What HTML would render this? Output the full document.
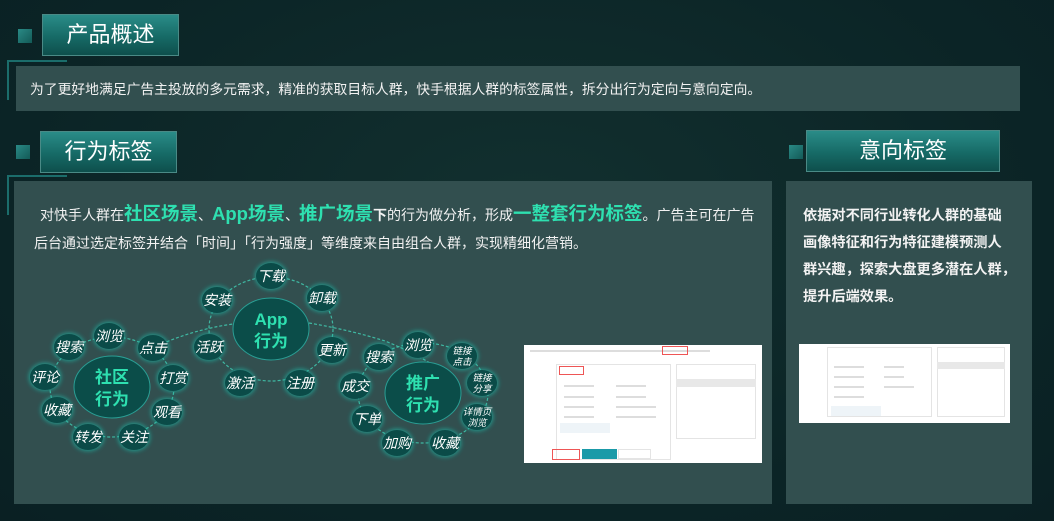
<!DOCTYPE html>
<html><head><meta charset="utf-8"><style>
*{margin:0;padding:0;box-sizing:border-box}
body{width:1054px;height:521px;overflow:hidden;background:radial-gradient(ellipse at 50% 40%,#12302f 0%,#0b2426 70%,#0a2023 100%);font-family:"Liberation Sans","Noto Sans CJK SC",sans-serif;color:#fff;position:relative}
.a{position:absolute}
.mk{position:absolute;width:14px;height:14px;background:linear-gradient(135deg,#2a8a86,#135a57)}
.tb{position:absolute;background:linear-gradient(180deg,#2a8c88 0%,#166a66 55%,#0e4f4c 100%);border:1px solid #4a8a86;color:#fff;font-size:22px;text-align:center}
.pn{position:absolute;background:#324f4f}
.lc{position:absolute;border-left:2px solid #1b6d6b;border-top:2px solid #1b6d6b;width:60px;height:40px}
.sh{position:absolute;background:#fff;overflow:hidden}
.g{position:absolute;background:#ccc;height:3px}
</style></head><body>
<div class="mk" style="left:18px;top:29px"></div>
<div class="tb" style="left:42px;top:14px;width:137px;height:42px;line-height:40px">产品概述</div>
<div class="lc" style="left:7px;top:60px"></div>
<div class="pn" style="left:16px;top:66px;width:1004px;height:45px"></div>
<div class="a" style="left:30px;top:80px;font-size:13.8px;line-height:20px;color:#f2f2f2">为了更好地满足广告主投放的多元需求，精准的获取目标人群，快手根据人群的标签属性，拆分出行为定向与意向定向。</div>

<div class="mk" style="left:16px;top:145px"></div>
<div class="tb" style="left:40px;top:131px;width:137px;height:42px;line-height:40px">行为标签</div>
<div class="lc" style="left:7px;top:175px"></div>
<div class="pn" style="left:14px;top:181px;width:758px;height:323px"></div>
<div class="a" style="left:40px;top:201px;font-size:14px;line-height:26px;color:#f2f2f2;width:740px;white-space:nowrap">对快手人群在<b style="color:#2ee0b0;font-size:18.5px">社区场景</b>、<b style="color:#2ee0b0;font-size:18.5px">App场景</b>、<b style="color:#2ee0b0;font-size:18.5px">推广场景</b><b>下</b>的行为做分析，形成<b style="color:#2ee0b0;font-size:18.5px">一整套行为标签</b>。广告主可在广告</div>
<div class="a" style="left:34px;top:232px;font-size:14px;line-height:22px;color:#f2f2f2">后台通过选定标签并结合「时间」「行为强度」等维度来自由组合人群，实现精细化营销。</div>

<div class="mk" style="left:789px;top:145px"></div>
<div class="tb" style="left:806px;top:130px;width:194px;height:42px;line-height:40px">意向标签</div>
<div class="pn" style="left:786px;top:181px;width:246px;height:323px"></div>
<div class="a" style="left:803px;top:203px;font-size:14.2px;line-height:27px;color:#f2f2f2;font-weight:bold;white-space:nowrap">依据对不同行业转化人群的基础<br>画像特征和行为特征建模预测人<br>群兴趣，探索大盘更多潜在人群，<br>提升后端效果。</div>

<svg class="a" style="left:0;top:0" width="1054" height="521">
<defs><filter id="gl" x="-50%" y="-50%" width="200%" height="200%"><feGaussianBlur stdDeviation="2.5"/></filter></defs>
<g fill="none" stroke="#3fb8a2" stroke-width="1.2" stroke-dasharray="3 2">
<ellipse cx="271" cy="329" rx="62" ry="52"/>
<ellipse cx="112" cy="387" rx="62" ry="50"/>
<ellipse cx="423" cy="393" rx="65" ry="50"/>
<path d="M153 348 Q190 330 233 324"/>
<path d="M309 323 Q350 330 385 341 Q420 355 440 370"/>
</g>
<g fill="#0b4d49" stroke="#2a9e94" stroke-width="1">
<ellipse cx="271" cy="329" rx="38" ry="31"/>
<ellipse cx="112" cy="387" rx="38" ry="31"/>
<ellipse cx="423" cy="393" rx="38" ry="31"/>
</g>
<g fill="#1fb0a0" filter="url(#gl)" opacity="0.8">
<ellipse cx="271" cy="276" rx="16" ry="14"/><ellipse cx="217" cy="300" rx="16" ry="14"/><ellipse cx="322" cy="298" rx="16" ry="14"/><ellipse cx="209" cy="347" rx="16" ry="14"/><ellipse cx="332" cy="350" rx="16" ry="14"/><ellipse cx="240" cy="383" rx="16" ry="14"/><ellipse cx="300" cy="383" rx="16" ry="14"/>
<ellipse cx="109" cy="336" rx="16" ry="14"/><ellipse cx="69" cy="347" rx="16" ry="14"/><ellipse cx="153" cy="348" rx="16" ry="14"/><ellipse cx="45" cy="377" rx="16" ry="14"/><ellipse cx="173" cy="378" rx="16" ry="14"/><ellipse cx="57" cy="410" rx="16" ry="14"/><ellipse cx="167" cy="412" rx="16" ry="14"/><ellipse cx="88" cy="437" rx="16" ry="14"/><ellipse cx="134" cy="437" rx="16" ry="14"/>
<ellipse cx="379" cy="357" rx="16" ry="14"/><ellipse cx="418" cy="345" rx="16" ry="14"/><ellipse cx="462" cy="356" rx="16" ry="14"/><ellipse cx="482" cy="383" rx="16" ry="14"/><ellipse cx="477" cy="417" rx="16" ry="14"/><ellipse cx="445" cy="443" rx="16" ry="14"/><ellipse cx="397" cy="443" rx="16" ry="14"/><ellipse cx="367" cy="419" rx="16" ry="14"/><ellipse cx="355" cy="386" rx="16" ry="14"/>
</g>
<g fill="#0b4b48">
<ellipse cx="271" cy="276" rx="15" ry="13"/><ellipse cx="217" cy="300" rx="15" ry="13"/><ellipse cx="322" cy="298" rx="15" ry="13"/><ellipse cx="209" cy="347" rx="15" ry="13"/><ellipse cx="332" cy="350" rx="15" ry="13"/><ellipse cx="240" cy="383" rx="15" ry="13"/><ellipse cx="300" cy="383" rx="15" ry="13"/>
<ellipse cx="109" cy="336" rx="15" ry="13"/><ellipse cx="69" cy="347" rx="15" ry="13"/><ellipse cx="153" cy="348" rx="15" ry="13"/><ellipse cx="45" cy="377" rx="15" ry="13"/><ellipse cx="173" cy="378" rx="15" ry="13"/><ellipse cx="57" cy="410" rx="15" ry="13"/><ellipse cx="167" cy="412" rx="15" ry="13"/><ellipse cx="88" cy="437" rx="15" ry="13"/><ellipse cx="134" cy="437" rx="15" ry="13"/>
<ellipse cx="379" cy="357" rx="15" ry="13"/><ellipse cx="418" cy="345" rx="15" ry="13"/><ellipse cx="462" cy="356" rx="15" ry="13"/><ellipse cx="482" cy="383" rx="15" ry="13"/><ellipse cx="477" cy="417" rx="15" ry="13"/><ellipse cx="445" cy="443" rx="15" ry="13"/><ellipse cx="397" cy="443" rx="15" ry="13"/><ellipse cx="367" cy="419" rx="15" ry="13"/><ellipse cx="355" cy="386" rx="15" ry="13"/>
</g>
<g fill="#2ee0b0" font-size="17" font-weight="bold" text-anchor="middle" font-family="Liberation Sans,Noto Sans CJK SC,sans-serif">
<text x="271" y="325">App</text><text x="271" y="347">行为</text>
<text x="112" y="383">社区</text><text x="112" y="405">行为</text>
<text x="423" y="389">推广</text><text x="423" y="411">行为</text>
</g>
<g fill="#fff" font-size="14" font-style="italic" text-anchor="middle" font-family="Noto Sans CJK SC,sans-serif">
<text x="271" y="281">下载</text><text x="217" y="305">安装</text><text x="322" y="303">卸载</text><text x="209" y="352">活跃</text><text x="332" y="355">更新</text><text x="240" y="388">激活</text><text x="300" y="388">注册</text>
<text x="109" y="341">浏览</text><text x="69" y="352">搜索</text><text x="153" y="353">点击</text><text x="45" y="382">评论</text><text x="173" y="383">打赏</text><text x="57" y="415">收藏</text><text x="167" y="417">观看</text><text x="88" y="442">转发</text><text x="134" y="442">关注</text>
<text x="379" y="362">搜索</text><text x="418" y="350">浏览</text><text x="355" y="391">成交</text><text x="367" y="424">下单</text><text x="397" y="448">加购</text><text x="445" y="448">收藏</text>
</g>
<g fill="#fff" font-size="9.5" font-style="italic" text-anchor="middle" font-family="Noto Sans CJK SC,sans-serif">
<text x="462" y="354">链接</text><text x="462" y="365">点击</text>
<text x="482" y="381">链接</text><text x="482" y="392">分享</text>
<text x="477" y="415">详情页</text><text x="477" y="426">浏览</text>
</g>
</svg>

<div class="sh" style="left:524px;top:345px;width:238px;height:118px">
<div class="g" style="left:6px;top:5px;width:180px;height:2px;background:#ddd"></div>
<div class="a" style="left:138px;top:1px;width:26px;height:9px;border:1px solid #e55"></div>
<div class="a" style="left:32px;top:19px;width:115px;height:96px;border:1px solid #e4e4e4"></div>
<div class="a" style="left:35px;top:21px;width:25px;height:9px;border:1px solid #e55"></div>
<div class="a" style="left:152px;top:19px;width:80px;height:75px;border:1px solid #e4e4e4"></div>
<div class="a" style="left:152px;top:34px;width:80px;height:8px;background:#e8e8e8"></div>
<div class="g" style="left:40px;top:40px;width:30px;height:2px;background:#ddd"></div><div class="g" style="left:92px;top:40px;width:30px;height:2px;background:#ddd"></div>
<div class="g" style="left:40px;top:51px;width:30px;height:2px;background:#ddd"></div><div class="g" style="left:92px;top:51px;width:30px;height:2px;background:#ddd"></div>
<div class="g" style="left:40px;top:61px;width:30px;height:2px;background:#ddd"></div><div class="g" style="left:92px;top:61px;width:40px;height:2px;background:#ddd"></div>
<div class="g" style="left:40px;top:71px;width:30px;height:2px;background:#ddd"></div><div class="g" style="left:92px;top:71px;width:40px;height:2px;background:#ddd"></div>
<div class="a" style="left:36px;top:78px;width:50px;height:10px;background:#eef4f8"></div>
<div class="a" style="left:28px;top:104px;width:28px;height:11px;border:1px solid #e55"></div>
<div class="a" style="left:58px;top:104px;width:35px;height:10px;background:#1a9aa8"></div>
<div class="a" style="left:94px;top:104px;width:33px;height:10px;border:1px solid #e4e4e4"></div>
</div>
<div class="sh" style="left:799px;top:344px;width:211px;height:79px">
<div class="a" style="left:28px;top:3px;width:105px;height:70px;border:1px solid #e4e4e4"></div>
<div class="a" style="left:138px;top:3px;width:68px;height:70px;border:1px solid #e4e4e4"></div>
<div class="a" style="left:138px;top:18px;width:68px;height:7px;background:#e8e8e8"></div>
<div class="a" style="left:32px;top:62px;width:50px;height:10px;background:#eef4f8"></div>
<div class="g" style="left:35px;top:22px;width:30px;height:2px;background:#ddd"></div><div class="g" style="left:85px;top:22px;width:20px;height:2px;background:#ddd"></div>
<div class="g" style="left:35px;top:32px;width:30px;height:2px;background:#ddd"></div><div class="g" style="left:85px;top:32px;width:20px;height:2px;background:#ddd"></div>
<div class="g" style="left:35px;top:42px;width:30px;height:2px;background:#ddd"></div><div class="g" style="left:85px;top:42px;width:30px;height:2px;background:#ddd"></div>
<div class="g" style="left:35px;top:52px;width:30px;height:2px;background:#ddd"></div>
</div>
</body></html>
